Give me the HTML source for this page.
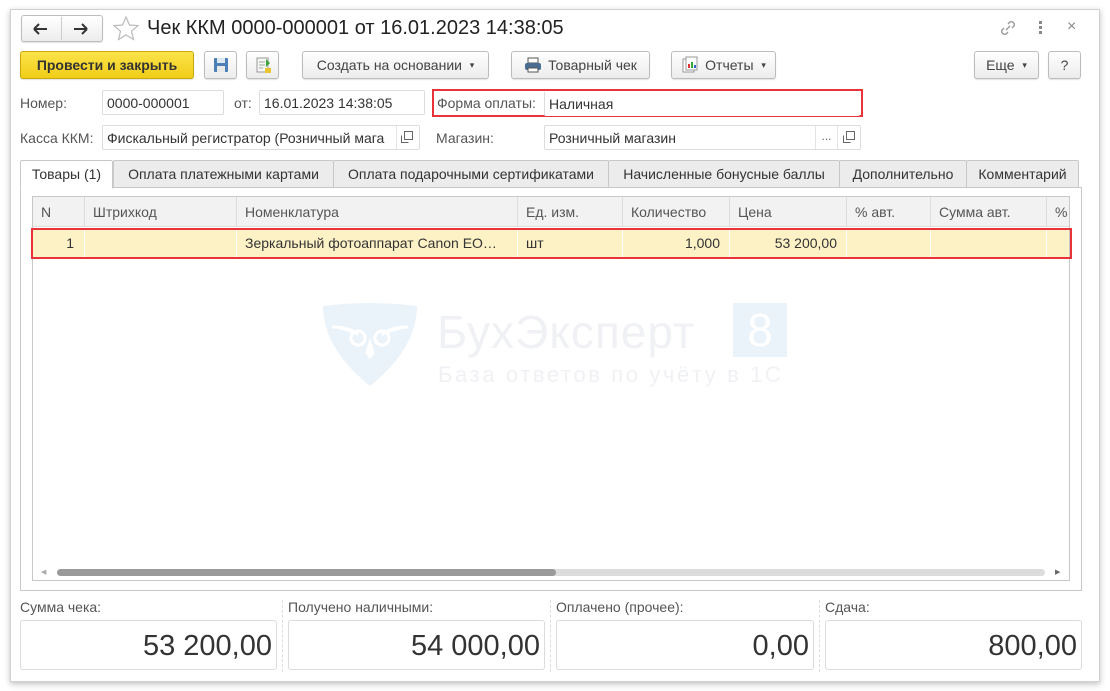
<!DOCTYPE html>
<html><head><meta charset="utf-8"><style>
*{box-sizing:border-box;margin:0;padding:0}
body{width:1110px;height:691px;background:#fff;font-family:"Liberation Sans",sans-serif;font-size:14px;color:#333;position:relative;overflow:hidden}
.a{position:absolute}
.win{left:10px;top:9px;width:1090px;height:673px;border:1px solid #d0d0d0;box-shadow:0 2px 6px rgba(0,0,0,.25);background:#fff}
.btn{position:absolute;height:28px;border:1px solid #bdbdbd;border-radius:3px;background:linear-gradient(#fff,#ececec);font-size:14px;color:#444;display:flex;align-items:center;justify-content:center;box-shadow:0 1px 1px rgba(0,0,0,.12)}
.inp{position:absolute;height:25px;border:1px solid #dcdcdc;border-radius:2px;background:#fff;font-size:14px;line-height:24px;padding-left:4px;color:#333;white-space:nowrap;overflow:hidden}
.lbl{position:absolute;font-size:14px;color:#555;line-height:26px}
.tab{position:absolute;top:160px;height:28px;border:1px solid #c8c8c8;background:#ececec;font-size:14px;color:#333;text-align:center;line-height:26px;border-radius:2px 2px 0 0}
.th{position:absolute;top:197px;height:30px;line-height:30px;font-size:14px;color:#555;border-right:1px solid #ddd;padding-left:8px}
.td{position:absolute;top:230px;height:27px;line-height:27px;font-size:14px;color:#333;border-right:1px solid #fff;white-space:nowrap;overflow:hidden}
.sl{position:absolute;top:599px;font-size:14px;color:#555}
.sb{position:absolute;top:620px;height:50px;border:1px solid #dcdcdc;border-radius:3px;font-size:29px;color:#333;text-align:right;padding-right:4px;line-height:50px}
.dash{position:absolute;top:600px;height:72px;border-left:1px dashed #ddd}
</style></head><body>
<div class="a win"></div>
<div class="btn" style="left:21px;top:15px;width:82px;height:27px"></div>
<div class="a" style="left:61px;top:17px;width:1px;height:23px;background:#ccc"></div>
<svg class="a" style="left:30px;top:20px" width="70" height="18"><path d="M4 9h13M4 9l5-5M4 9l5 5" stroke="#333" stroke-width="2" fill="none"/><path d="M44 9h13M57 9l-5-5M57 9l-5 5" stroke="#333" stroke-width="2" fill="none"/></svg>
<svg class="a" style="left:112px;top:15px" width="28" height="26"><path d="M14 2l3.5 8 8.5.6-6.5 5.6 2 8.3L14 20l-7.5 4.5 2-8.3L2 10.6l8.5-.6z" fill="none" stroke="#bbb" stroke-width="1.2"/></svg>
<div class="a" style="left:147px;top:17px;font-size:20px;color:#222">Чек ККМ 0000-000001 от 16.01.2023 14:38:05</div>
<svg class="a" style="left:998px;top:18px" width="20" height="20"><path d="M8 12l4-4M6 10l-2 2a3 3 0 004 4l2-2M14 10l2-2a3 3 0 00-4-4l-2 2" stroke="#999" stroke-width="1.4" fill="none"/></svg>
<div class="a" style="left:1039px;top:21px;width:3px;height:3px;background:#888;box-shadow:0 5px 0 #888,0 10px 0 #888"></div>
<div class="a" style="left:1067px;top:18px;font-size:16px;color:#888">×</div>
<div class="btn" style="left:20px;top:51px;width:174px;background:linear-gradient(#fbe34a,#f1cd17);border-color:#c9a90a;font-weight:bold;color:#333">Провести и закрыть</div>
<div class="btn" style="left:204px;top:51px;width:33px"><svg width="18" height="18"><rect x="2" y="2" width="14" height="14" rx="1" fill="#4c7fb5"/><rect x="5" y="2" width="8" height="5" fill="#dde8f3"/><rect x="5" y="10" width="8" height="6" fill="#e8e8e8"/></svg></div>
<div class="btn" style="left:246px;top:51px;width:33px"><svg width="18" height="18"><rect x="3" y="2" width="11" height="14" fill="#f6f6f6" stroke="#999"/><path d="M5 6h6M5 9h6M5 12h4" stroke="#9a9"/><path d="M12 3l4 4-4 4z" fill="#3aa53a"/><rect x="11" y="12" width="6" height="5" fill="#e8c531"/></svg></div>
<div class="btn" style="left:302px;top:51px;width:187px">Создать на основании&nbsp;&nbsp;<span style="font-size:9px">▾</span></div>
<div class="btn" style="left:511px;top:51px;width:139px"><svg width="18" height="16" style="margin-right:6px"><rect x="4" y="1" width="10" height="5" fill="#fff" stroke="#555"/><rect x="1" y="6" width="16" height="7" rx="2" fill="#4a6d94"/><rect x="4" y="11" width="10" height="4" fill="#fff" stroke="#555"/></svg>Товарный чек</div>
<div class="btn" style="left:671px;top:51px;width:105px"><svg width="18" height="18" style="margin-right:6px"><rect x="2" y="3" width="11" height="13" fill="#fff" stroke="#999"/><rect x="5" y="1" width="11" height="13" fill="#fff" stroke="#999"/><rect x="7" y="8" width="2" height="4" fill="#d33"/><rect x="10" y="6" width="2" height="6" fill="#3a3"/><rect x="13" y="9" width="2" height="3" fill="#36c"/></svg>Отчеты&nbsp;&nbsp;<span style="font-size:9px">▾</span></div>
<div class="btn" style="left:974px;top:51px;width:65px">Еще&nbsp;&nbsp;<span style="font-size:9px">▾</span></div>
<div class="btn" style="left:1048px;top:51px;width:33px">?</div>
<div class="lbl" style="left:20px;top:90px">Номер:</div>
<div class="inp" style="left:102px;top:90px;width:122px">0000-000001</div>
<div class="lbl" style="left:234px;top:90px">от:</div>
<div class="inp" style="left:259px;top:90px;width:166px">16.01.2023 14:38:05</div>
<div class="a" style="left:432px;top:89px;width:431px;height:28px;border:2px solid #e8333a"></div>
<div class="lbl" style="left:437px;top:90px">Форма оплаты:</div>
<div class="inp" style="left:544px;top:91px;width:316px;border-color:transparent;border-left-color:#ddd">Наличная</div>
<div class="lbl" style="left:20px;top:125px">Касса ККМ:</div>
<div class="inp" style="left:102px;top:125px;width:318px">Фискальный регистратор (Розничный мага</div>
<div class="a" style="left:396px;top:126px;width:23px;height:23px;background:#fff;border-left:1px solid #e4e4e4"></div>
<svg class="a" style="left:400px;top:130px" width="14" height="14"><rect x="4.5" y="1.5" width="8" height="8" fill="none" stroke="#666"/><path d="M1.5 5.5v7h7" fill="none" stroke="#666"/></svg>
<div class="lbl" style="left:436px;top:125px">Магазин:</div>
<div class="inp" style="left:544px;top:125px;width:317px">Розничный магазин</div>
<div class="a" style="left:815px;top:126px;width:22px;height:23px;border-left:1px solid #e4e4e4;text-align:center;font-size:12px;color:#666;line-height:20px">...</div>
<div class="a" style="left:837px;top:126px;width:23px;height:23px;border-left:1px solid #e4e4e4"></div>
<svg class="a" style="left:842px;top:130px" width="14" height="14"><rect x="4.5" y="1.5" width="8" height="8" fill="none" stroke="#666"/><path d="M1.5 5.5v7h7" fill="none" stroke="#666"/></svg>
<div class="a" style="left:20px;top:187px;width:1062px;height:404px;border:1px solid #c8c8c8;background:#fff"></div>
<div class="tab" style="left:113px;width:221px">Оплата платежными картами</div>
<div class="tab" style="left:333px;width:276px">Оплата подарочными сертификатами</div>
<div class="tab" style="left:608px;width:232px">Начисленные бонусные баллы</div>
<div class="tab" style="left:839px;width:128px">Дополнительно</div>
<div class="tab" style="left:966px;width:113px">Комментарий</div>
<div class="tab" style="left:20px;width:93px;background:#fff;border-bottom-color:#fff;height:29px">Товары (1)</div>
<div class="a" style="left:32px;top:196px;width:1038px;height:385px;border:1px solid #c8c8c8;background:#fff"></div>
<div class="a" style="left:33px;top:197px;width:1036px;height:30px;background:#f2f2f2;border-bottom:1px solid #ddd"></div>
<div class="th" style="left:33px;width:52px">N</div>
<div class="th" style="left:85px;width:152px">Штрихкод</div>
<div class="th" style="left:237px;width:281px">Номенклатура</div>
<div class="th" style="left:518px;width:105px">Ед. изм.</div>
<div class="th" style="left:623px;width:107px">Количество</div>
<div class="th" style="left:730px;width:117px">Цена</div>
<div class="th" style="left:847px;width:84px">% авт.</div>
<div class="th" style="left:931px;width:116px">Сумма авт.</div>
<div class="th" style="left:1047px;width:22px;border:0">%</div>
<div class="a" style="left:33px;top:230px;width:1036px;height:27px;background:#fdf1c6"></div>
<div class="td" style="left:33px;width:52px;text-align:right;padding-right:10px">1</div>
<div class="td" style="left:85px;width:152px"></div>
<div class="td" style="left:237px;width:281px;padding-left:8px">Зеркальный фотоаппарат Canon EO…</div>
<div class="td" style="left:518px;width:105px;padding-left:8px">шт</div>
<div class="td" style="left:623px;width:107px;text-align:right;padding-right:9px">1,000</div>
<div class="td" style="left:730px;width:117px;text-align:right;padding-right:9px">53 200,00</div>
<div class="td" style="left:847px;width:84px"></div>
<div class="td" style="left:931px;width:116px"></div>
<div class="a" style="left:31px;top:228px;width:1041px;height:31px;border:2px solid #e8333a"></div>
<svg class="a" style="left:320px;top:303px" width="100" height="85"><path d="M3 3Q50-3 97 3Q97 45 50 83Q3 45 3 3z" fill="#eaf3fa"/><circle cx="38" cy="35" r="7" fill="none" stroke="#fff" stroke-width="3"/><circle cx="62" cy="35" r="7" fill="none" stroke="#fff" stroke-width="3"/><path d="M12 24q18 0 26 8M88 24q-18 0-26 8M50 40l-3 10 3 4 3-4z" stroke="#fff" stroke-width="3" fill="#fff"/></svg>
<div class="a" style="left:437px;top:305px;font-size:46px;color:#f0f1f4;letter-spacing:1px">БухЭксперт</div>
<div class="a" style="left:733px;top:303px;width:54px;height:54px;background:#ebf3fa;color:#fff;font-size:46px;text-align:center;line-height:54px">8</div>
<div class="a" style="left:438px;top:362px;font-size:22px;color:#f0f1f4;letter-spacing:2.6px">База ответов по учёту в 1С</div>
<div class="a" style="left:57px;top:569px;width:988px;height:7px;border-radius:4px;background:#dcdcdc"></div>
<div class="a" style="left:57px;top:569px;width:499px;height:7px;border-radius:4px;background:#9a9a9a"></div>
<div class="a" style="left:41px;top:568px;font-size:7px;color:#aaa">◀</div>
<div class="a" style="left:1055px;top:568px;font-size:7px;color:#666">▶</div>
<div class="sl" style="left:20px">Сумма чека:</div>
<div class="sl" style="left:288px">Получено наличными:</div>
<div class="sl" style="left:556px">Оплачено (прочее):</div>
<div class="sl" style="left:825px">Сдача:</div>
<div class="dash" style="left:282px"></div><div class="dash" style="left:550px"></div><div class="dash" style="left:819px"></div>
<div class="sb" style="left:20px;width:257px">53 200,00</div>
<div class="sb" style="left:288px;width:257px">54 000,00</div>
<div class="sb" style="left:556px;width:258px">0,00</div>
<div class="sb" style="left:825px;width:257px">800,00</div>
</body></html>
